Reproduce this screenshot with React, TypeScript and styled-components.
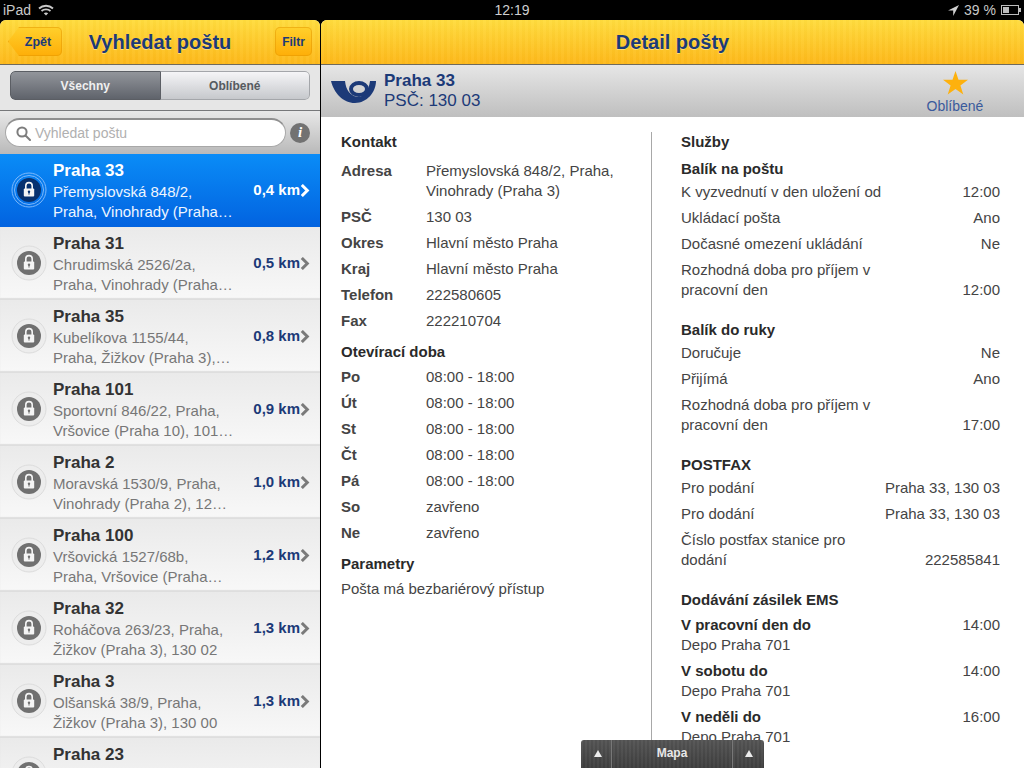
import React, { FC } from 'react';
import styled, { createGlobalStyle } from 'styled-components';

const GlobalStyle = createGlobalStyle`
    html, body {
        margin: 0;
        padding: 0;
        background: #000000;
    }
    * {
        box-sizing: border-box;
    }
`

const Root = styled.div`
    position: relative;
    width: 1024px;
    height: 768px;
    overflow: hidden;
    background: #000000;
    font-family: "Liberation Sans", Arial, sans-serif;
    display: flex;
    flex-direction: column;
`

const StatusBar = styled.div`
    height: 20px;
    flex: none;
    display: grid;
    grid-template-columns: 1fr 1fr 1fr;
    align-items: center;
    padding: 0 3px 0 3px;
    color: #c9c9c9;
    font-size: 14px;
`

const StatusLeft = styled.div`
    display: flex;
    align-items: center;
    gap: 7px;
`

const StatusTime = styled.div`
    text-align: center;
    font-size: 14px;
    color: #cfcfcf;
`

const StatusRight = styled.div`
    display: flex;
    align-items: center;
    justify-content: flex-end;
    gap: 5px;
`

const Panels = styled.div`
    flex: 1;
    display: flex;
    gap: 1px;
    min-height: 0;
`

const LeftPanel = styled.div`
    width: 320px;
    flex: none;
    display: flex;
    flex-direction: column;
    border-radius: 6px 6px 0 0;
    overflow: hidden;
    background: #e8e8e8;
`

const RightPanel = styled.div`
    flex: 1;
    display: flex;
    flex-direction: column;
    border-radius: 6px 6px 0 0;
    overflow: hidden;
    background: #ffffff;
`

const NavBar = styled.div`
    position: relative;
    height: 45px;
    flex: none;
    display: flex;
    align-items: center;
    justify-content: center;
    border-bottom: 1px solid #6f6a5c;
    background:
        repeating-linear-gradient(90deg, rgba(255, 255, 255, 0.03) 0 3px, rgba(160, 110, 0, 0.025) 3px 6px),
        linear-gradient(#ffdc3e, #fdb81a);
`

const NavTitle = styled.div`
    color: #1c3a78;
    font-weight: bold;
    font-size: 20px;
    text-shadow: 0 1px 0 rgba(255, 240, 170, 0.6);
`

const BackButton = styled.div`
    position: absolute;
    top: 7px;
    left: 8px;
    width: 54px;
    height: 29px;
    padding-left: 6px;
    border-radius: 5px;
    clip-path: polygon(0 50%, 11px 0, 100% 0, 100% 100%, 11px 100%);
    background: linear-gradient(#ffd02c, #feae08);
    box-shadow: inset 0 0 0 1px rgba(225, 150, 0, 0.5);
    color: #1c3a78;
    font-size: 12.5px;
    font-weight: bold;
    display: flex;
    align-items: center;
    justify-content: center;
`

const FilterButton = styled.div`
    position: absolute;
    top: 7px;
    right: 8px;
    width: 37px;
    height: 29px;
    border-radius: 5px;
    background: linear-gradient(#ffd02c, #feae08);
    box-shadow: inset 0 0 0 1px rgba(225, 150, 0, 0.5);
    color: #1c3a78;
    font-size: 12px;
    font-weight: bold;
    display: flex;
    align-items: center;
    justify-content: center;
`

const SegmentArea = styled.div`
    height: 46px;
    flex: none;
    padding: 6px 10px 0;
    background: #e6e6e6;
    border-bottom: 1px solid #77787a;
`

const Segment = styled.div`
    height: 29px;
    display: flex;
    border-radius: 5px;
    overflow: hidden;
`

const SegmentItem = styled.div<{ $active?: boolean }>`
    flex: 1;
    display: flex;
    align-items: center;
    justify-content: center;
    font-size: 12px;
    font-weight: bold;
    color: ${(p) => (p.$active ? '#f0f0f0' : '#555a60')};
    background: ${(p) =>
        p.$active ? 'linear-gradient(#92959b, #5f636b)' : 'linear-gradient(#f5f5f7, #c6c8cc)'};
    border: 1px solid ${(p) => (p.$active ? '#5b5e64' : '#a4a6aa')};
    border-radius: ${(p) => (p.$active ? '5px 0 0 5px' : '0 5px 5px 0')};
    border-left-width: ${(p) => (p.$active ? '1px' : '0')};
`

const SearchArea = styled.div`
    height: 43px;
    flex: none;
    display: flex;
    align-items: center;
    gap: 4px;
    padding: 0 10px 0 5px;
    background: linear-gradient(#e8e8e8, #b9b9b9);
`

const SearchBox = styled.div`
    width: 281px;
    height: 29px;
    display: flex;
    align-items: center;
    gap: 4px;
    padding-left: 10px;
    border-radius: 15px;
    background: #ffffff;
    border: 1px solid #a8a8a8;
    border-top: 2px solid #8f8f8f;
    color: #b0b0b0;
    font-size: 14px;
`

const InfoBadge = styled.div`
    width: 20px;
    height: 20px;
    border-radius: 50%;
    background: #727272;
    color: #ffffff;
    font-family: "Liberation Serif", serif;
    font-style: italic;
    font-weight: bold;
    font-size: 15px;
    display: flex;
    align-items: center;
    justify-content: center;
`

const PostList = styled.div`
    flex: 1;
    min-height: 0;
    overflow: hidden;
`

const PostRow = styled.div<{ $selected?: boolean }>`
    height: 73px;
    display: flex;
    align-items: flex-start;
    padding: 7px 10px 0 11px;
    background: ${(p) =>
        p.$selected ? 'linear-gradient(#0a8cf7, #0263e0)' : 'linear-gradient(#eaeaea, #f8f8f8)'};
    box-shadow: ${(p) => (p.$selected ? 'none' : 'inset 0 -2px 1px #dedede')};
`

const LockWrap = styled.div`
    width: 36px;
    flex: none;
    margin: 11px 6px 0 0;
    display: flex;
    justify-content: center;
`

const RowText = styled.div`
    flex: 1;
    min-width: 0;
`

const RowName = styled.div<{ $selected?: boolean }>`
    font-size: 17px;
    line-height: 20px;
    font-weight: bold;
    color: ${(p) => (p.$selected ? '#ffffff' : '#333333')};
`

const RowAddress = styled.div<{ $selected?: boolean }>`
    font-size: 15px;
    line-height: 20px;
    white-space: nowrap;
    margin-top: 1px;
    color: ${(p) => (p.$selected ? '#eef5ff' : '#777777')};
`

const RowDistance = styled.div<{ $selected?: boolean }>`
    display: flex;
    align-items: center;
    gap: 0;
    margin-top: 19px;
    font-size: 15px;
    line-height: 20px;
    font-weight: bold;
    color: ${(p) => (p.$selected ? '#ffffff' : '#1c3a78')};
`

const DetailHeader = styled.div`
    height: 52px;
    flex: none;
    display: flex;
    align-items: center;
    padding: 0 0 0 10px;
    background: linear-gradient(#e6e6e6, #bfbfbf);
`

const HeaderText = styled.div`
    flex: 1;
    margin-left: 8px;
    color: #1c3a78;
    font-size: 17px;
    line-height: 20px;
`

const HeaderName = styled.div`
    font-weight: bold;
`

const FavouriteBox = styled.div`
    width: 70px;
    margin: 3px 34px 0 0;
    display: flex;
    flex-direction: column;
    align-items: center;
    gap: 3px;
    color: #3a5a9c;
    font-size: 14px;
    line-height: 16px;
`

const DetailBody = styled.div`
    flex: 1;
    min-height: 0;
    overflow: hidden;
    display: flex;
    padding: 15px 0 0 20px;
    color: #444444;
    font-size: 15px;
    line-height: 20px;
`

const LeftColumn = styled.div`
    width: 310px;
    flex: none;
`

const RightColumn = styled.div`
    flex: 1;
    padding: 0 24px 0 29px;
    border-left: 1px solid #a8a8a8;
`

const Heading = styled.div<{ $top?: number; $bottom?: number }>`
    font-weight: bold;
    color: #2a2a2a;
    margin-top: ${(p) => p.$top ?? 0}px;
    margin-bottom: ${(p) => p.$bottom ?? 0}px;
`

const ContactRow = styled.div`
    display: flex;
    padding: 3px 0;
`

const ContactLabel = styled.div`
    width: 85px;
    flex: none;
    font-weight: bold;
`

const ServiceRow = styled.div<{ $alignTop?: boolean }>`
    display: flex;
    justify-content: space-between;
    align-items: ${(p) => (p.$alignTop ? 'flex-start' : 'flex-end')};
    padding: 3px 0;
`

const ServiceLabel = styled.div<{ $wrap?: boolean }>`
    ${(p) => (p.$wrap ? 'max-width: 200px;' : '')}
`

const BoldLine = styled.div`
    font-weight: bold;
    color: #2a2a2a;
`

const MapTab = styled.div`
    position: absolute;
    left: 581px;
    bottom: 0;
    width: 183px;
    height: 28px;
    display: flex;
    border-radius: 3px 3px 0 0;
    color: #e8e8e8;
    font-size: 12px;
    font-weight: bold;
    background:
        repeating-linear-gradient(90deg, rgba(255, 255, 255, 0.03) 0 2px, rgba(0, 0, 0, 0.04) 2px 4px),
        linear-gradient(#555555, #3f3f3f);
`

const MapCell = styled.div`
    width: 31px;
    display: flex;
    align-items: center;
    justify-content: center;
    padding: 0 0 2px 3px;
    border-right: 1px solid #777777;
    &:last-child {
        border-right: none;
        padding-left: 0;
    }
`

const MapTitle = styled.div`
    flex: 1;
    display: flex;
    align-items: center;
    justify-content: center;
    padding-bottom: 2px;
    border-right: 1px solid #777777;
`

const WifiIcon: FC = () => (
    <svg width="16" height="12" viewBox="0 0 16 12" fill="none" stroke="#c9c9c9" strokeWidth="1.8">
        <path d="M1 4.5C5 .8 11 .8 15 4.5" />
        <path d="M3.5 7C6 4.8 10 4.8 12.5 7" />
        <path d="M8 11.5 5.800 9.200C7 8.200 9 8.200 10.200 9.200Z" fill="#c9c9c9" stroke="none" />
    </svg>
)

const ArrowIcon: FC = () => (
    <svg width="11" height="11" viewBox="0 0 11 11">
        <path d="M11 0 0 5.500h5.200V11Z" fill="#d0d0d0" />
    </svg>
)

const BatteryIcon: FC = () => (
    <svg width="20" height="10" viewBox="0 0 20 10">
        <rect x=".5" y=".5" width="17" height="9" fill="none" stroke="#bdbdbd" />
        <rect x="2" y="2" width="6" height="6" fill="#bdbdbd" />
        <rect x="18" y="3" width="2" height="4" fill="#bdbdbd" />
    </svg>
)

const SearchIcon: FC = () => (
    <svg width="15" height="15" viewBox="0 0 15 15" fill="none" stroke="#7d7d7d" strokeWidth="2">
        <circle cx="6" cy="6" r="4.600" />
        <path d="M9.500 9.500 14 14" strokeLinecap="round" />
    </svg>
)

const MapArrow: FC = () => (
    <svg width="8" height="7" viewBox="0 0 8 7">
        <path d="M4 0 8 7H0Z" fill="#ececec" />
    </svg>
)

const LockIcon: FC<{ selected?: boolean }> = ({ selected }) => {
    const inner = selected ? '#06316f' : '#707070';
    return (
        <svg width="36" height="36" viewBox="0 0 36 36">
            <circle cx="18" cy="18" r="17" fill={selected ? 'none' : '#ededed'} stroke={selected ? '#7db8fa' : '#dcdcdc'} />
            {selected && <circle cx="18" cy="18" r="14.500" fill="none" stroke="#7db8fa" />}
            <circle cx="18" cy="18" r="12" fill={inner} />
            <path d="M14.800 17v-3.200a3.200 3.200 0 0 1 6.400 0V17" fill="none" stroke="#f4f4f4" strokeWidth="1.600" />
            <rect x="12.800" y="16.500" width="10.400" height="8" rx="1" fill="#f4f4f4" />
            <circle cx="18" cy="19.800" r="1.200" fill={inner} />
            <rect x="17.500" y="20" width="1" height="2.600" fill={inner} />
        </svg>
    );
}

const Chevron: FC<{ selected?: boolean }> = ({ selected }) => (
    <svg width="10" height="13" viewBox="0 0 10 13" fill="none" stroke={selected ? '#ffffff' : '#7a7a7a'} strokeWidth="3">
        <path d="M1.800 1 7.300 6.500 1.800 12" />
    </svg>
)

const PostLogo: FC = () => (
    <svg width="45" height="23" viewBox="0 0 45 23">
        <path d="M0 1H14C15 10 19 16 27 17C33 17 38 10 39 1H45C45 12 36 23 24 23C12 23 3 13 0 1Z" fill="#1c3a78" />
        <ellipse cx="28" cy="9" rx="8" ry="6" fill="none" stroke="#1c3a78" strokeWidth="4" />
    </svg>
)

const StarIcon: FC = () => (
    <svg width="25" height="24" viewBox="0 0 25 24">
        <path d="M12.500 0l3 8.800h9.500l-7.600 5.600 2.900 9.100-7.800-5.500-7.800 5.500 2.900-9.100L0 8.800h9.500Z" fill="#fdb10e" />
    </svg>
)

interface Post {
    name: string;
    address: string[];
    distance?: string;
}

const posts: Post[] = [
    { name: 'Praha 33', address: ['Přemyslovská 848/2,', 'Praha, Vinohrady (Praha…'], distance: '0,4 km' },
    { name: 'Praha 31', address: ['Chrudimská 2526/2a,', 'Praha, Vinohrady (Praha…'], distance: '0,5 km' },
    { name: 'Praha 35', address: ['Kubelíkova 1155/44,', 'Praha, Žižkov (Praha 3),…'], distance: '0,8 km' },
    { name: 'Praha 101', address: ['Sportovní 846/22, Praha,', 'Vršovice (Praha 10), 101…'], distance: '0,9 km' },
    { name: 'Praha 2', address: ['Moravská 1530/9, Praha,', 'Vinohrady (Praha 2), 12…'], distance: '1,0 km' },
    { name: 'Praha 100', address: ['Vršovická 1527/68b,', 'Praha, Vršovice (Praha…'], distance: '1,2 km' },
    { name: 'Praha 32', address: ['Roháčova 263/23, Praha,', 'Žižkov (Praha 3), 130 02'], distance: '1,3 km' },
    { name: 'Praha 3', address: ['Olšanská 38/9, Praha,', 'Žižkov (Praha 3), 130 00'], distance: '1,3 km' },
    { name: 'Praha 23', address: [] },
];

const contacts = [
    ['PSČ', '130 03'],
    ['Okres', 'Hlavní město Praha'],
    ['Kraj', 'Hlavní město Praha'],
    ['Telefon', '222580605'],
    ['Fax', '222210704'],
];

const hours = [
    ['Po', '08:00 - 18:00'],
    ['Út', '08:00 - 18:00'],
    ['St', '08:00 - 18:00'],
    ['Čt', '08:00 - 18:00'],
    ['Pá', '08:00 - 18:00'],
    ['So', 'zavřeno'],
    ['Ne', 'zavřeno'],
];

const emsRows = [
    ['V pracovní den do', '14:00'],
    ['V sobotu do', '14:00'],
    ['V neděli do', '16:00'],
];

const Service: FC<{ label: string; value: string; wrap?: boolean }> = ({ label, value, wrap }) => (
    <ServiceRow>
        <ServiceLabel $wrap={wrap}>{label}</ServiceLabel>
        <div>{value}</div>
    </ServiceRow>
);

const App: FC = () => {
    return (
        <Root>
            <GlobalStyle />
            <StatusBar>
                <StatusLeft>
                    iPad
                    <WifiIcon />
                </StatusLeft>
                <StatusTime>12:19</StatusTime>
                <StatusRight>
                    <ArrowIcon />
                    39 %
                    <BatteryIcon />
                </StatusRight>
            </StatusBar>
            <Panels>
                <LeftPanel>
                    <NavBar>
                        <BackButton>Zpět</BackButton>
                        <NavTitle>Vyhledat poštu</NavTitle>
                        <FilterButton>Filtr</FilterButton>
                    </NavBar>
                    <SegmentArea>
                        <Segment>
                            <SegmentItem $active>Všechny</SegmentItem>
                            <SegmentItem>Oblíbené</SegmentItem>
                        </Segment>
                    </SegmentArea>
                    <SearchArea>
                        <SearchBox>
                            <SearchIcon />
                            Vyhledat poštu
                        </SearchBox>
                        <InfoBadge>i</InfoBadge>
                    </SearchArea>
                    <PostList>
                        {posts.map((post, index) => (
                            <PostRow key={post.name} $selected={index === 0}>
                                <LockWrap>
                                    <LockIcon selected={index === 0} />
                                </LockWrap>
                                <RowText>
                                    <RowName $selected={index === 0}>{post.name}</RowName>
                                    <RowAddress $selected={index === 0}>
                                        {post.address.map((line) => (
                                            <div key={line}>{line}</div>
                                        ))}
                                    </RowAddress>
                                </RowText>
                                {post.distance && (
                                    <RowDistance $selected={index === 0}>
                                        {post.distance}
                                        <Chevron selected={index === 0} />
                                    </RowDistance>
                                )}
                            </PostRow>
                        ))}
                    </PostList>
                </LeftPanel>
                <RightPanel>
                    <NavBar>
                        <NavTitle>Detail pošty</NavTitle>
                    </NavBar>
                    <DetailHeader>
                        <PostLogo />
                        <HeaderText>
                            <HeaderName>Praha 33</HeaderName>
                            PSČ: 130 03
                        </HeaderText>
                        <FavouriteBox>
                            <StarIcon />
                            Oblíbené
                        </FavouriteBox>
                    </DetailHeader>
                    <DetailBody>
                        <LeftColumn>
                            <Heading $bottom={6}>Kontakt</Heading>
                            <ContactRow>
                                <ContactLabel>Adresa</ContactLabel>
                                <div>Přemyslovská 848/2, Praha,<br />Vinohrady (Praha 3)</div>
                            </ContactRow>
                            {contacts.map(([label, value]) => (
                                <ContactRow key={label}>
                                    <ContactLabel>{label}</ContactLabel>
                                    <div>{value}</div>
                                </ContactRow>
                            ))}
                            <Heading $top={8} $bottom={2}>Otevírací doba</Heading>
                            {hours.map(([label, value]) => (
                                <ContactRow key={label}>
                                    <ContactLabel>{label}</ContactLabel>
                                    <div>{value}</div>
                                </ContactRow>
                            ))}
                            <Heading $top={8} $bottom={5}>Parametry</Heading>
                            <div>Pošta má bezbariérový přístup</div>
                        </LeftColumn>
                        <RightColumn>
                            <Heading $bottom={7}>Služby</Heading>
                            <Heading>Balík na poštu</Heading>
                            <Service label="K vyzvednutí v den uložení od" value="12:00" />
                            <Service label="Ukládací pošta" value="Ano" />
                            <Service label="Dočasné omezení ukládání" value="Ne" />
                            <Service label="Rozhodná doba pro příjem v pracovní den" value="12:00" wrap />
                            <Heading $top={17}>Balík do ruky</Heading>
                            <Service label="Doručuje" value="Ne" />
                            <Service label="Přijímá" value="Ano" />
                            <Service label="Rozhodná doba pro příjem v pracovní den" value="17:00" wrap />
                            <Heading $top={17}>POSTFAX</Heading>
                            <Service label="Pro podání" value="Praha 33, 130 03" />
                            <Service label="Pro dodání" value="Praha 33, 130 03" />
                            <Service label="Číslo postfax stanice pro dodání" value="222585841" wrap />
                            <Heading $top={17} $bottom={2}>Dodávání zásilek EMS</Heading>
                            {emsRows.map(([label, value]) => (
                                <ServiceRow key={label} $alignTop>
                                    <div>
                                        <BoldLine>{label}</BoldLine>
                                        Depo Praha 701
                                    </div>
                                    <div>{value}</div>
                                </ServiceRow>
                            ))}
                        </RightColumn>
                    </DetailBody>
                </RightPanel>
            </Panels>
            <MapTab>
                <MapCell><MapArrow /></MapCell>
                <MapTitle>Mapa</MapTitle>
                <MapCell><MapArrow /></MapCell>
            </MapTab>
        </Root>
    );
}

export default App;
